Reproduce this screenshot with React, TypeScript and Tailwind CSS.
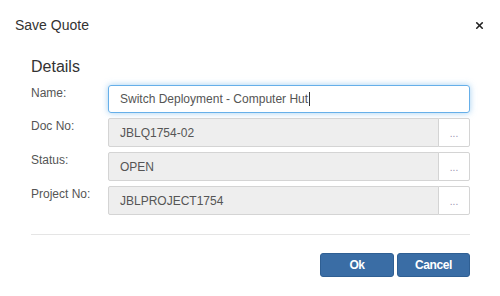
import { X } from 'lucide-react'

const rows = [
  { label: 'Doc No:', value: 'JBLQ1754-02' },
  { label: 'Status:', value: 'OPEN' },
  { label: 'Project No:', value: 'JBLPROJECT1754' },
]

export default function App() {
  return (
    <div className="w-[500px] h-[296px] bg-white text-[#333] font-['Liberation_Sans',Arial,sans-serif] overflow-hidden">
      {/* Header */}
      <div className="h-[50px] flex items-center justify-between pl-[15px] pr-[15px]">
        <h4 className="text-[14px] leading-[20px] text-[#333]">Save Quote</h4>
        <button type="button" aria-label="Close" className="text-[#222]">
          <X className="h-[11px] w-[11px]" strokeWidth={3.5} />
        </button>
      </div>

      {/* Body */}
      <div className="pl-[31px] pr-[30px]">
        <div className="mt-[7px] text-[16px] leading-[20px] text-[#333]">Details</div>

        <div className="mt-[8px] flex flex-col gap-[5px]">
          {/* Name */}
          <div className="flex items-start">
            <label className="w-[77px] text-[12px] leading-[16px] text-[#555]">Name:</label>
            <div className="flex-1 h-[28px] flex items-center pl-[11px] rounded-[3px] border border-[#66afe9] shadow-[0_0_6px_rgba(102,175,233,0.6)] text-[12px] text-[#555]">
              Switch Deployment - Computer Hut
              <span className="ml-[1px] w-[1px] h-[14px] bg-[#333]" />
            </div>
          </div>

          {rows.map((row) => (
            <div key={row.label} className="flex items-start">
              <label className="w-[77px] text-[12px] leading-[16px] text-[#555]">{row.label}</label>
              <div className="flex-1 h-[29px] flex">
                <div className="flex-1 flex items-center pl-[11px] bg-[#eeeeee] border border-[#d4d4d4] rounded-l-[2px] text-[12px] text-[#555]">
                  {row.value}
                </div>
                <button
                  type="button"
                  className="w-[32px] -ml-[1px] bg-white border border-[#d4d4d4] rounded-r-[2px] text-[10px] leading-none text-[#9a8fb0] pt-[3px]"
                >
                  ...
                </button>
              </div>
            </div>
          ))}
        </div>

        <div className="mt-[19px] border-t border-[#e5e5e5]" />

        {/* Footer */}
        <div className="mt-[18px] flex justify-end gap-[3px]">
          <button
            type="button"
            className="w-[74px] h-[24px] rounded-[3px] bg-[#3a6da5] border border-[#2f5f93] text-white text-[12px] font-bold tracking-[-0.4px]"
          >
            Ok
          </button>
          <button
            type="button"
            className="w-[73px] h-[24px] rounded-[3px] bg-[#3a6da5] border border-[#2f5f93] text-white text-[12px] font-bold tracking-[-0.4px]"
          >
            Cancel
          </button>
        </div>
      </div>
    </div>
  )
}
